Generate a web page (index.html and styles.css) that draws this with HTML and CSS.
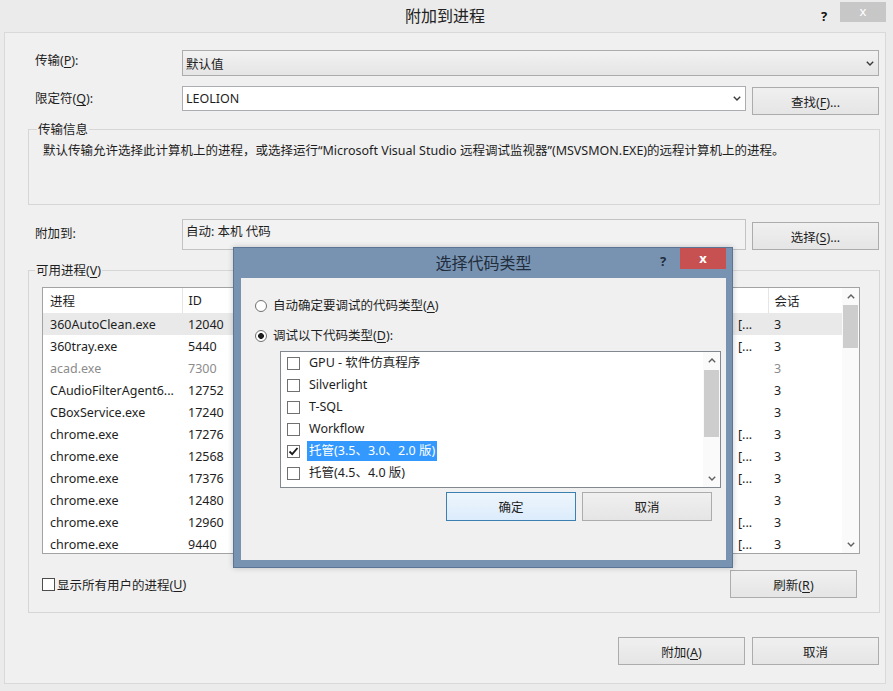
FILE: index.html
```html
<!DOCTYPE html>
<html lang="zh-CN">
<head>
    <meta charset="UTF-8">
    <title>附加到进程</title>
    <link rel="stylesheet" href="styles.css">
</head>
<body>
<div class="window">
    <div class="titlebar">
        <span></span>
        <span class="title">附加到进程</span>
        <div class="caption-buttons">
            <span class="help">?</span>
            <span class="close">x</span>
        </div>
    </div>

    <div class="client">
        <div class="field-row">
            <span class="field-label">传输(<u>P</u>):</span>
            <div class="combo combo-list">
                <span>默认值</span>
                <svg class="chevron" width="8" height="5" viewBox="0 0 8 5"><polyline points="0.8,0.8 4,4 7.2,0.8" fill="none" stroke="#3a3a3a" stroke-width="1.4"/></svg>
            </div>
        </div>

        <div class="field-row qualifier-row">
            <span class="field-label">限定符(<u>Q</u>):</span>
            <div class="combo combo-edit">
                <span>LEOLION</span>
                <svg class="chevron" width="8" height="5" viewBox="0 0 8 5"><polyline points="0.8,0.8 4,4 7.2,0.8" fill="none" stroke="#3a3a3a" stroke-width="1.4"/></svg>
            </div>
            <button class="btn">查找(<u>F</u>)...</button>
        </div>

        <div class="group info-group">
            <div class="group-title">传输信息</div>
            <div class="info-text">默认传输允许选择此计算机上的进程，或选择运行“Microsoft Visual Studio 远程调试监视器”(MSVSMON.EXE)的远程计算机上的进程。</div>
        </div>

        <div class="field-row attach-row">
            <span class="field-label">附加到:</span>
            <div class="readonly-box">自动: 本机 代码</div>
            <button class="btn">选择(<u>S</u>)...</button>
        </div>

        <div class="group proc-group">
            <div class="group-title">可用进程(<u>V</u>)</div>
            <div class="proc-body">
                <div class="listview">
                    <div class="table-wrap">
                        <table class="proc-table">
                            <colgroup>
                                <col style="width:139px"><col style="width:80px"><col style="width:298px"><col style="width:172px"><col style="width:36px"><col style="width:74px">
                            </colgroup>
                            <thead>
                                <tr><th>进程</th><th>ID</th><th></th><th></th><th></th><th class="last">会话</th></tr>
                            </thead>
                            <tbody>
                                <tr class="hot"><td>360AutoClean.exe</td><td>12040</td><td></td><td></td><td>[...</td><td>3</td></tr>
                                <tr><td>360tray.exe</td><td>5440</td><td></td><td></td><td>[...</td><td>3</td></tr>
                                <tr class="dim"><td>acad.exe</td><td>7300</td><td></td><td></td><td></td><td>3</td></tr>
                                <tr><td>CAudioFilterAgent6...</td><td>12752</td><td></td><td></td><td></td><td>3</td></tr>
                                <tr><td>CBoxService.exe</td><td>17240</td><td></td><td></td><td></td><td>3</td></tr>
                                <tr><td>chrome.exe</td><td>17276</td><td></td><td></td><td>[...</td><td>3</td></tr>
                                <tr><td>chrome.exe</td><td>12568</td><td></td><td></td><td>[...</td><td>3</td></tr>
                                <tr><td>chrome.exe</td><td>17376</td><td></td><td></td><td>[...</td><td>3</td></tr>
                                <tr><td>chrome.exe</td><td>12480</td><td></td><td></td><td></td><td>3</td></tr>
                                <tr><td>chrome.exe</td><td>12960</td><td></td><td></td><td>[...</td><td>3</td></tr>
                                <tr><td>chrome.exe</td><td>9440</td><td></td><td></td><td>[...</td><td>3</td></tr>
                            </tbody>
                        </table>
                    </div>
                    <div class="vscroll">
                        <div class="sb-arrow"><svg width="8" height="5" viewBox="0 0 8 5"><polyline points="0.8,4.2 4,1 7.2,4.2" fill="none" stroke="#606060" stroke-width="1.4"/></svg></div>
                        <div class="sb-thumb"></div>
                        <div class="sb-track"></div>
                        <div class="sb-arrow"><svg width="8" height="5" viewBox="0 0 8 5"><polyline points="0.8,0.8 4,4 7.2,0.8" fill="none" stroke="#606060" stroke-width="1.4"/></svg></div>
                    </div>
                </div>
                <div class="proc-footer">
                    <label class="check"><span class="box"></span>显示所有用户的进程(<u>U</u>)</label>
                    <button class="btn">刷新(<u>R</u>)</button>
                </div>
            </div>
        </div>

        <div class="dialog-buttons">
            <button class="btn">附加(<u>A</u>)</button>
            <button class="btn">取消</button>
        </div>
    </div>

    <div class="modal">
        <div class="modal-titlebar">
            <span></span>
            <span class="modal-title">选择代码类型</span>
            <div class="caption-buttons">
                <span class="modal-help">?</span>
                <span class="modal-close">x</span>
            </div>
        </div>
        <div class="modal-client">
            <div class="radio-row first"><span class="radio"></span>自动确定要调试的代码类型(<u>A</u>)</div>
            <div class="radio-row"><span class="radio checked"></span>调试以下代码类型(<u>D</u>):</div>
            <div class="code-list">
                <ul class="code-items">
                    <li><span class="cbox"></span><span class="item-text">GPU - 软件仿真程序</span></li>
                    <li><span class="cbox"></span><span class="item-text">Silverlight</span></li>
                    <li><span class="cbox"></span><span class="item-text">T-SQL</span></li>
                    <li><span class="cbox"></span><span class="item-text">Workflow</span></li>
                    <li><span class="cbox"><svg width="11" height="11" viewBox="0 0 11 11"><polyline points="1.5,5.5 4.2,8.2 9.5,2" fill="none" stroke="#1a1a1a" stroke-width="1.8"/></svg></span><span class="item-text selected">托管(3.5、3.0、2.0 版)</span></li>
                    <li><span class="cbox"></span><span class="item-text">托管(4.5、4.0 版)</span></li>
                </ul>
                <div class="vscroll small">
                    <div class="sb-arrow"><svg width="8" height="5" viewBox="0 0 8 5"><polyline points="0.8,4.2 4,1 7.2,4.2" fill="none" stroke="#606060" stroke-width="1.4"/></svg></div>
                    <div class="sb-thumb"></div>
                    <div class="sb-track"></div>
                    <div class="sb-arrow"><svg width="8" height="5" viewBox="0 0 8 5"><polyline points="0.8,0.8 4,4 7.2,0.8" fill="none" stroke="#606060" stroke-width="1.4"/></svg></div>
                </div>
            </div>
            <div class="modal-buttons">
                <button class="btn btn-wide btn-default">确定</button>
                <button class="btn btn-wide">取消</button>
            </div>
        </div>
    </div>
</div>
</body>
</html>
```

FILE: styles.css
```css
* {
    box-sizing: border-box;
}

body {
    margin: 0;
    font-family: "Noto Sans", "Noto Sans CJK SC", sans-serif;
    font-size: 12.5px;
    color: #1e1e1e;
    background: #ebebeb;
}

u {
    text-decoration: underline;
    text-underline-offset: 2px;
}

.window {
    position: relative;
    width: 893px;
    height: 691px;
    padding: 0 7px 7px 4px;
    display: flex;
    flex-direction: column;
    background: #ebebeb;
}

/* title bar */
.titlebar {
    height: 32px;
    display: grid;
    grid-template-columns: 1fr auto 1fr;
    align-items: start;
}

.title {
    font-size: 16px;
    line-height: 32px;
    color: #222;
}

.caption-buttons {
    display: flex;
    justify-content: flex-end;
    align-items: flex-start;
}

.help {
    width: 16px;
    margin: 6px 8px 0 0;
    text-align: center;
    font-weight: bold;
    font-size: 13px;
    line-height: 20px;
    color: #111;
}

.close {
    width: 46px;
    height: 20px;
    margin-top: 2px;
    background: #c7c7c7;
    color: #fff;
    text-align: center;
    line-height: 18px;
    font-size: 13px;
}

/* client area */
.client {
    flex: 1;
    border: 1px solid #d9d9d9;
    background: #f0f0f0;
    padding: 17px 5px 0 23px;
}

.field-row {
    display: flex;
    align-items: flex-start;
}

.field-label {
    width: 154px;
    padding-left: 7px;
    line-height: 21px;
}

.qualifier-row {
    margin-top: 10px;
}

.qualifier-row .field-label {
    line-height: 25px;
}

.combo {
    display: flex;
    align-items: center;
    justify-content: space-between;
    padding: 0 4px 0 3px;
    border: 1px solid #acacac;
}

.combo-list {
    width: 697px;
    height: 26px;
    background: linear-gradient(#f2f2f2, #e5e5e5);
}

.combo-edit {
    width: 564px;
    height: 25px;
    background: #fff;
    border-color: #abadb3;
}

.btn {
    width: 127px;
    height: 28px;
    padding: 0;
    border: 1px solid #acacac;
    background: linear-gradient(#f0f0f0, #e5e5e5);
    font-family: inherit;
    font-size: inherit;
    color: #1e1e1e;
}

.qualifier-row .btn {
    margin: 1px 0 0 6px;
}

.attach-row {
    margin-top: 14px;
}

.attach-row .field-label {
    margin-top: 6px;
    line-height: 17px;
}

.attach-row .btn {
    margin: 3px 0 0 6px;
}

.readonly-box {
    width: 564px;
    height: 31px;
    padding: 3px;
    border: 1px solid #c3c3c3;
    background: #f2f2f2;
    line-height: 17px;
}

/* group boxes */
.group {
    border: 1px solid #d6d6d6;
}

.group-title {
    display: table;
    margin: -9px 0 0 8px;
    padding: 0 1px;
    line-height: 17px;
    background: #f0f0f0;
}

.info-group {
    margin-top: 14px;
}

.info-text {
    height: 66px;
    padding: 4px 0 0 14px;
    line-height: 17px;
    white-space: nowrap;
}

.proc-group {
    margin-top: 20px;
}

.proc-group .group-title {
    margin-left: 6px;
}

.proc-body {
    padding: 8px 0 14px 13px;
}

/* process list */
.listview {
    width: 818px;
    height: 267px;
    display: flex;
    border: 1px solid #a3a3a3;
    background: #fff;
}

.table-wrap {
    flex: 1;
    overflow: hidden;
}

.proc-table {
    width: 799px;
    border-collapse: collapse;
    table-layout: fixed;
}

.proc-table th {
    height: 25px;
    padding: 0 0 0 6px;
    text-align: left;
    font-weight: normal;
    border-right: 1px solid #e5e5e5;
    white-space: nowrap;
    overflow: hidden;
}

.proc-table th.last {
    border-right: none;
}

.proc-table td {
    height: 22px;
    padding: 0 0 0 6px;
    white-space: nowrap;
    overflow: hidden;
}

.proc-table th:first-child,
.proc-table td:first-child {
    padding-left: 7px;
}

.proc-table tr.hot td {
    background: #e9e9e9;
}

.proc-table tr.dim td {
    color: #8c8c8c;
}

.vscroll {
    width: 17px;
    display: flex;
    flex-direction: column;
    background: #fafafa;
}

.sb-arrow {
    height: 17px;
    display: flex;
    align-items: center;
    justify-content: center;
}

.sb-thumb {
    height: 43px;
    margin: 0 1px;
    background: #cdcdcd;
}

.vscroll.small .sb-thumb {
    height: 67px;
    margin-top: 1px;
}

.sb-track {
    flex: 1;
}

.proc-footer {
    width: 815px;
    margin-top: 16px;
    display: flex;
    align-items: center;
    justify-content: space-between;
}

.check {
    display: flex;
    align-items: center;
}

.check .box {
    width: 13px;
    height: 13px;
    margin-right: 2px;
    border: 1px solid #4d4d4d;
    background: #fff;
}

.dialog-buttons {
    margin-top: 24px;
    padding-right: 1px;
    display: flex;
    justify-content: flex-end;
    gap: 7px;
}

/* modal: 选择代码类型 */
.modal {
    position: absolute;
    left: 233px;
    top: 247px;
    width: 500px;
    height: 321px;
    padding: 0 6px 7px 7px;
    display: flex;
    flex-direction: column;
    border: 1px solid #5a7595;
    background: #7893b1;
    box-shadow: 0 0 6px rgba(0, 0, 0, 0.2);
}

.modal-titlebar {
    height: 30px;
    display: grid;
    grid-template-columns: 1fr auto 1fr;
    align-items: start;
}

.modal-title {
    font-size: 16px;
    line-height: 30px;
    color: #1f2d3d;
}

.modal-help {
    width: 14px;
    margin: 3px 10px 0 0;
    text-align: center;
    font-weight: bold;
    font-size: 13px;
    line-height: 20px;
    color: #1f2d3d;
}

.modal-close {
    width: 46px;
    height: 21px;
    background: #c75050;
    color: #fff;
    text-align: center;
    font-weight: bold;
    font-size: 13px;
    line-height: 20px;
}

.modal-client {
    flex: 1;
    padding: 0 14px;
    background: #f0f0f0;
}

.radio-row {
    display: flex;
    align-items: center;
    margin-top: 13px;
    line-height: 17px;
}

.radio-row.first {
    margin-top: 19px;
}

.radio {
    width: 12px;
    height: 12px;
    margin-right: 6px;
    border: 1px solid #707070;
    border-radius: 50%;
    background: #fff;
}

.radio.checked {
    background: radial-gradient(circle, #1e1e1e 0 2.6px, #fff 3.2px);
}

.code-list {
    width: 441px;
    height: 137px;
    margin: 7px 0 0 25px;
    display: flex;
    border: 1px solid #828790;
    background: #fff;
}

.code-items {
    flex: 1;
    margin: 0;
    padding: 0;
    list-style: none;
}

.code-items li {
    height: 22px;
    padding-left: 6px;
    display: flex;
    align-items: center;
}

.cbox {
    width: 13px;
    height: 13px;
    margin-right: 7px;
    display: flex;
    align-items: center;
    justify-content: center;
    border: 1px solid #707070;
    background: #fff;
}

.item-text {
    padding: 0 2px;
    line-height: 20px;
}

.item-text.selected {
    background: #3399ff;
    color: #fff;
}

.modal-buttons {
    margin-top: 4px;
    display: flex;
    justify-content: flex-end;
    gap: 6px;
}

.btn-wide {
    width: 130px;
    height: 29px;
}

.btn-default {
    border-color: #3c7fb1;
    background: linear-gradient(#eef5fc, #dcecfc);
}
```
